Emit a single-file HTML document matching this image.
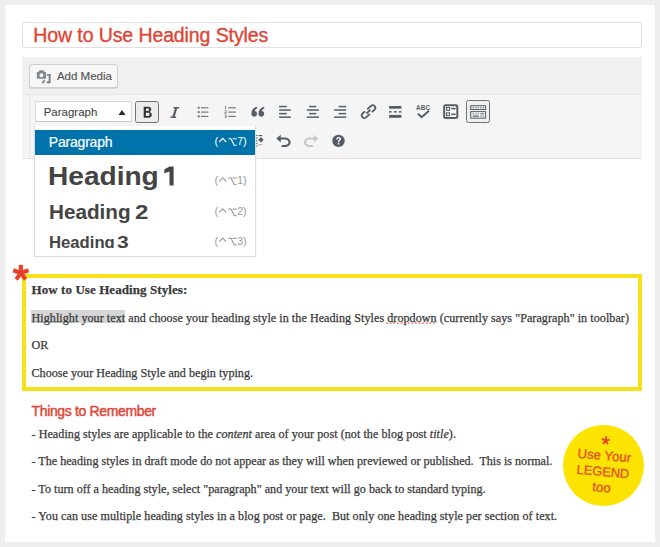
<!DOCTYPE html>
<html><head><meta charset="utf-8">
<style>
*{margin:0;padding:0;box-sizing:border-box}
html,body{width:660px;height:547px;overflow:hidden;background:#eeeeee}
body{position:relative;font-family:"Liberation Sans",sans-serif}
.a{position:absolute}
.t{position:absolute;white-space:pre;line-height:1}
#panel{left:5px;top:5px;width:650px;height:537px;background:#fff}
#title{left:22px;top:21.5px;width:620px;height:26.2px;border:1px solid #e0e0e0;border-radius:3px;background:#fff}
#tools{left:22px;top:57px;width:620px;height:37px;background:#f0f0f0}
#addmedia{left:28.9px;top:64.2px;width:89.6px;height:24.2px;border:1px solid #cfcfcf;border-radius:3px;background:#f7f7f7;box-shadow:0 1px 0 #d5d5d5}
#tbar{left:22px;top:94px;width:620px;height:64.5px;background:#f5f5f5;border-top:1px solid #e6e6e6;border-bottom:1px solid #e2e2e2}
#tbl{left:29px;top:95px;width:1px;height:63.5px;background:#e9e9e9}
#sel{left:34.5px;top:100.7px;width:97px;height:21.7px;background:#fff;border:1px solid #dadada;border-bottom-color:#c8c8c8}
#bbtn{left:135.2px;top:100.6px;width:24.3px;height:22px;border:1px solid #727272;border-radius:2.5px;background:#ececec}
#ksbtn{left:466.2px;top:100.4px;width:23.8px;height:22.2px;border:1px solid #717171;border-radius:2.5px;background:#efefef}
#dd{left:34.1px;top:125.3px;width:221.9px;height:131.7px;background:#fff;border:1px solid #dedede;border-top-color:#f2f2f2;box-shadow:0 1px 2px rgba(0,0,0,.05)}
#ddclip{left:35px;top:127px;width:220px;height:121px;overflow:hidden}
#ddblue{left:0;top:3px;width:220px;height:25px;background:#0073aa}
.sc{color:#9a9a9a;font-size:10.7px}
.h{color:#444;font-weight:bold}
#ybox{left:21.5px;top:274px;width:620.5px;height:117px;border:4px solid #f6e219}
.ser{font-family:"Liberation Serif",serif;color:#3a3a3a;font-size:12.1px;-webkit-text-stroke:0.25px #3a3a3a}
.red{color:#de4536}
#circle{left:563px;top:425px;width:81px;height:81px;border-radius:50%;background:#fde300}
svg{position:absolute;overflow:visible}
</style></head><body>
<div id="panel" class="a"></div>
<div id="title" class="a"></div>
<div class="t red" style="left:33.3px;top:25.5px;font-size:19.5px;letter-spacing:-0.1px;-webkit-text-stroke:0.35px #de4536">How to Use Heading Styles</div>

<div id="tools" class="a"></div>
<div id="addmedia" class="a"></div>
<div class="t" style="left:56.9px;top:71.3px;font-size:11.5px;color:#555;-webkit-text-stroke:0.15px #555">Add Media</div>

<div id="tbar" class="a"></div><div id="tbl" class="a"></div>
<div id="sel" class="a"></div>
<div class="t" style="left:43.7px;top:106.8px;font-size:11.5px;color:#444;-webkit-text-stroke:0.1px #444">Paragraph</div>
<div id="bbtn" class="a"></div>
<div id="ksbtn" class="a"></div>

<div id="dd" class="a"></div>
<div id="ddclip" class="a">
  <div id="ddblue" class="a"></div>
  <div class="t" style="left:13.8px;top:8.3px;font-size:14px;letter-spacing:-0.2px;color:#fff;-webkit-text-stroke:0.2px #fff">Paragraph</div>
  <div class="t h" style="left:13.4px;top:36.4px;font-size:26px;transform:scaleX(1.08);transform-origin:0 0">Heading</div>
  <div class="t h" style="left:13.5px;top:74.7px;font-size:20.1px;transform:scaleX(1.03);transform-origin:0 0">Heading</div><div class="t h" style="left:100px;top:74.7px;font-size:20.1px;transform:scaleX(1.2);transform-origin:0 0">2</div>
  <div class="t h" style="left:14px;top:106.8px;font-size:16.2px;transform:scaleX(1.03);transform-origin:0 0">Heading</div><div class="t h" style="left:81.5px;top:106.8px;font-size:16.2px;transform:scaleX(1.3);transform-origin:0 0">3</div>
</div>

<svg style="left:0;top:0" width="660" height="547"><path fill="#444" d="M169.5 166.4 L173.6 166.4 L173.6 185.5 L169.5 185.5 L169.5 171.4 L164.3 173.3 L164.3 169.6 Z"/><g fill="#fff" font-family="Liberation Sans" font-size="11"><text x="214.4" y="145.0">(</text><text x="237.3" y="145.0" font-size="10.4">7</text><text x="242.9" y="145.0">)</text></g><g fill="none" stroke="#fff" stroke-width="1.15"><polyline points="219.2,142.0 222.7,138.4 226.2,142.0"/><path d="M228.3 138.7 L231 138.7 L234.2 145.2 L236.6 145.2 M232.6 138.7 L236.6 138.7"/></g><g fill="#9b9b9b" font-family="Liberation Sans" font-size="11"><text x="214.4" y="184.3">(</text><text x="237.3" y="184.3" font-size="10.4">1</text><text x="242.9" y="184.3">)</text></g><g fill="none" stroke="#9b9b9b" stroke-width="1.15"><polyline points="219.2,181.3 222.7,177.7 226.2,181.3"/><path d="M228.3 178.0 L231 178.0 L234.2 184.5 L236.6 184.5 M232.6 178.0 L236.6 178.0"/></g><g fill="#9b9b9b" font-family="Liberation Sans" font-size="11"><text x="214.4" y="215.4">(</text><text x="237.3" y="215.4" font-size="10.4">2</text><text x="242.9" y="215.4">)</text></g><g fill="none" stroke="#9b9b9b" stroke-width="1.15"><polyline points="219.2,212.4 222.7,208.8 226.2,212.4"/><path d="M228.3 209.1 L231 209.1 L234.2 215.6 L236.6 215.6 M232.6 209.1 L236.6 209.1"/></g><g fill="#9b9b9b" font-family="Liberation Sans" font-size="11"><text x="214.4" y="244.6">(</text><text x="237.3" y="244.6" font-size="10.4">3</text><text x="242.9" y="244.6">)</text></g><g fill="none" stroke="#9b9b9b" stroke-width="1.15"><polyline points="219.2,241.6 222.7,238.0 226.2,241.6"/><path d="M228.3 238.3 L231 238.3 L234.2 244.8 L236.6 244.8 M232.6 238.3 L236.6 238.3"/></g></svg>
<div id="ybox" class="a"></div>
<div class="t ser" style="left:31.5px;top:283.2px;font-weight:bold;font-size:13px;letter-spacing:0.08px">How to Use Heading Styles:</div>
<div class="a" style="left:31.3px;top:309.7px;width:93.7px;height:13.6px;background:#d6d6d6"></div>
<div class="t ser" style="left:31.5px;top:311.5px;letter-spacing:0.052px">Highlight your text and choose your heading style in the Heading Styles dropdown (currently says "Paragraph" in toolbar)</div>
<div class="t ser" style="left:31.5px;top:338.6px">OR</div>
<div class="t ser" style="left:31.5px;top:366.5px;letter-spacing:0.02px">Choose your Heading Style and begin typing.</div>

<div class="t red" style="left:31.5px;top:403.6px;font-size:14px;letter-spacing:-0.35px;-webkit-text-stroke:0.45px #de4536">Things to Remember</div>
<div class="t ser" style="left:31.5px;top:427.6px;letter-spacing:0.055px">- Heading styles are applicable to the <i>content</i> area of your post (not the blog post <i>title</i>).</div>
<div class="t ser" style="left:31.5px;top:454.8px">- The heading styles in draft mode do not appear as they will when previewed or published.  This is normal.</div>
<div class="t ser" style="left:31.5px;top:482.8px;letter-spacing:0.019px">- To turn off a heading style, select "paragraph" and your text will go back to standard typing.</div>
<div class="t ser" style="left:31.5px;top:510.4px;letter-spacing:0.055px">- You can use multiple heading styles in a blog post or page.  But only one heading style per section of text.</div>

<div id="circle" class="a"></div>
<svg id="ov" style="left:0;top:0" width="660" height="547" viewBox="0 0 660 547">
<g fill="#82878c">
 <rect x="36.8" y="71.8" width="9.3" height="6.9" rx="1.3"/>
 <rect x="39" y="70.3" width="4.9" height="3" rx="1"/>
 <rect x="48.6" y="74" width="2" height="8.6"/>
 <rect x="47" y="74" width="3.6" height="1.8"/>
 <ellipse cx="48.6" cy="82.3" rx="1.9" ry="1.3"/>
 <path d="M44.6 79.5 L45.3 80 L44 83.2 L42 83.5 L41.8 82 Z"/>
</g>
<circle cx="41.45" cy="75.2" r="1.95" fill="#f9f9f9"/>
<path d="M118.4 114.9 L122 109.9 L125.6 114.9Z" fill="#2c2c2c"/>
<g fill="#555d66">
 </g>
<g fill="#676d72">
 <!-- bullets -->
 <circle cx="198.7" cy="107.8" r="1.15"/><circle cx="198.7" cy="112.1" r="1.15"/><circle cx="198.7" cy="116.4" r="1.15"/>
 <rect x="201" y="107.25" width="7.4" height="1.1"/><rect x="201" y="111.55" width="7.4" height="1.1"/><rect x="201" y="115.85" width="7.4" height="1.1"/>
 <!-- numbered -->
 <rect x="225.3" y="105.9" width="0.8" height="3.2"/>
 <rect x="224.7" y="110.5" width="1.8" height="0.7"/><rect x="225.8" y="111.2" width="0.7" height="0.9"/><rect x="224.7" y="112.1" width="1.8" height="0.7"/><rect x="224.7" y="112.8" width="0.7" height="0.6"/><rect x="224.7" y="113.4" width="1.8" height="0.7"/>
 <rect x="224.7" y="114.8" width="1.8" height="0.7"/><rect x="225.8" y="115.5" width="0.7" height="0.7"/><rect x="224.9" y="116.1" width="1.6" height="0.6"/><rect x="225.8" y="116.7" width="0.7" height="0.7"/><rect x="224.7" y="117.3" width="1.8" height="0.7"/>
 <rect x="228.3" y="107.25" width="7.5" height="1.1"/><rect x="228.3" y="111.55" width="7.5" height="1.1"/><rect x="228.3" y="115.85" width="7.5" height="1.1"/>
 </g>
<g fill="#555d66">
 <!-- quote -->
 <path d="M251.4 113.8 C251.4 110.2 253.3 107.9 256.9 106.8 L257.3 108.2 C255.6 109 254.9 110 254.7 111 A2.85 2.85 0 1 1 251.4 113.8Z"/>
 <path d="M258.5 113.8 C258.5 110.2 260.4 107.9 264 106.8 L264.4 108.2 C262.7 109 262 110 261.8 111 A2.85 2.85 0 1 1 258.5 113.8Z"/>
 <!-- align left -->
 <rect x="279.1" y="105.8" width="7.6" height="1.5"/><rect x="279.1" y="109.3" width="11.7" height="1.5"/><rect x="279.1" y="112.9" width="7.6" height="1.5"/><rect x="279.1" y="116.4" width="11.7" height="1.5"/>
 <!-- align center -->
 <rect x="309.1" y="105.8" width="7.2" height="1.5"/><rect x="306.8" y="109.3" width="12.1" height="1.5"/><rect x="309.1" y="112.9" width="7.2" height="1.5"/><rect x="306.8" y="116.4" width="12.1" height="1.5"/>
 <!-- align right -->
 <rect x="338.6" y="105.8" width="7.6" height="1.5"/><rect x="334.1" y="109.3" width="12.1" height="1.5"/><rect x="338.6" y="112.9" width="7.6" height="1.5"/><rect x="334.1" y="116.4" width="12.1" height="1.5"/>
 <!-- read more -->
 <rect x="389.1" y="106" width="12.3" height="2.7"/>
 <rect x="389.1" y="111.1" width="2.5" height="1.5"/><rect x="393.9" y="111.1" width="2.8" height="1.5"/><rect x="398.9" y="111.1" width="2.5" height="1.5"/>
 <rect x="389.1" y="114.9" width="12.3" height="2.9"/>
 <!-- help -->
 <circle cx="338.5" cy="140.9" r="6.2"/>
</g>
<g fill="none" stroke="#555d66">
 <!-- link -->
 <g transform="translate(368.5 111.65) rotate(-42)" stroke-width="1.8" stroke-linecap="butt">
  <path d="M0.6 -2.6 L5.6 -2.6 A2.6 2.6 0 0 1 5.6 2.6 L2.4 2.6"/>
  <path d="M-0.6 2.6 L-5.6 2.6 A2.6 2.6 0 0 1 -5.6 -2.6 L-2.4 -2.6"/>
  <path d="M-2.8 0 L2.8 0"/>
 </g>
 <!-- spellcheck -->
 <polyline points="417.8,113.6 421.6,117.3 429,110.8" stroke-width="1.9"/>
 <!-- form -->
 <rect x="444.2" y="105.2" width="13.1" height="12.8" rx="1.5" stroke-width="2" fill="#fbfbfb"/>
 <rect x="446.6" y="107.5" width="3" height="2.8" stroke-width="1.1" fill="#fff"/>
 <rect x="446.6" y="112.9" width="3" height="2.8" stroke-width="1.1" fill="#fff"/>
 <!-- kitchen sink -->
 <rect x="470.75" y="105.75" width="14.8" height="3.7" stroke-width="1.05" fill="#fafafa"/>
 <rect x="470.75" y="111.65" width="14.8" height="6.5" stroke-width="1.05" fill="#fafafa"/>
</g>
<g fill="#555d66">
 <rect x="451.3" y="107.8" width="4.4" height="1.6"/><rect x="451.3" y="113.5" width="4.4" height="1.6"/>
 <rect x="472.7" y="107.1" width="1.2" height="1.1"/><rect x="475.2" y="107.1" width="1.2" height="1.1"/><rect x="477.7" y="107.1" width="1.2" height="1.1"/><rect x="480.2" y="107.1" width="1.2" height="1.1"/><rect x="482.7" y="107.1" width="1.2" height="1.1"/>
 <rect x="472.7" y="113.3" width="1.2" height="1.1"/><rect x="475.2" y="113.3" width="1.2" height="1.1"/><rect x="477.7" y="113.3" width="1.2" height="1.1"/><rect x="480.4" y="113.3" width="3.5" height="1.1"/>
 <rect x="472.7" y="115.5" width="6.2" height="1.2"/><rect x="480.4" y="115.5" width="1.2" height="1.2"/><rect x="482.7" y="115.5" width="1.2" height="1.2"/>
 <!-- undo -->
 <path d="M276.3 138.6 L280.8 134.8 L280.8 137.4 L284.6 137.4 C288.3 137.4 290.6 139.6 290.6 142.2 C290.6 144.8 288.3 147 284.6 147 L281.6 147 L281.6 145 L284.6 145 C287 145 288.5 143.8 288.5 142.2 C288.5 140.6 287 139.5 284.6 139.5 L280.8 139.5 L280.8 142.4 Z"/>
 <!-- indent partial -->
 <rect x="256.2" y="135" width="1.3" height="1.1"/><rect x="256.2" y="137.6" width="1.3" height="1.1"/><rect x="256.2" y="140.2" width="1.3" height="1.1"/><rect x="256.2" y="142.8" width="1.3" height="1.1"/><rect x="256.2" y="145.4" width="1.3" height="1.1"/>
 <rect x="258.5" y="135" width="3.6" height="1.1"/>
 <path d="M258.4 139.8 L261 137.1 L263.6 139.8 L261 142.5 Z"/>
 <rect x="258.5" y="144.2" width="3.4" height="1" opacity="0.5"/>
</g>
<path transform="translate(594.6 0) scale(-1 1)" fill="#c5c8cb" d="M276.3 138.6 L280.8 134.8 L280.8 137.4 L284.6 137.4 C288.3 137.4 290.6 139.6 290.6 142.2 C290.6 144.8 288.3 147 284.6 147 L281.6 147 L281.6 145 L284.6 145 C287 145 288.5 143.8 288.5 142.2 C288.5 140.6 287 139.5 284.6 139.5 L280.8 139.5 L280.8 142.4 Z"/>
<line x1="386.2" y1="323.1" x2="434.5" y2="323.1" stroke="#e4492f" stroke-width="1.1" stroke-dasharray="1.7 1.9" opacity="0.85"/>
<path fill="#fff" d="M336.2 139.4 C336.2 137.9 337.2 137 338.6 137 C340 137 341 137.9 341 139.1 C341 140.2 340.3 140.7 339.7 141.1 C339.3 141.4 339.2 141.7 339.2 142.2 L337.9 142.2 C337.9 141.3 338.1 140.8 338.7 140.3 C339.3 139.9 339.5 139.6 339.5 139.1 C339.5 138.6 339.1 138.3 338.6 138.3 C338 138.3 337.6 138.7 337.6 139.4 Z M337.85 143 H339.25 V144.4 H337.85 Z"/>
<text x="423.1" y="109.7" fill="#555d66" font-family="Liberation Sans" font-weight="bold" font-size="6.3" text-anchor="middle" letter-spacing="0.2">ABC</text>
<!-- B and I -->
<path fill="#333" fill-rule="evenodd" d="M143.7 106.7 H148.2 C150.2 106.7 151.2 107.9 151.2 109.4 C151.2 110.6 150.5 111.5 149.5 111.9 C150.9 112.3 151.8 113.3 151.8 114.8 C151.8 116.6 150.5 117.8 148.3 117.8 H143.7 Z M145.9 108.6 H147.9 C148.7 108.6 149.1 109.1 149.1 109.7 C149.1 110.4 148.7 110.9 147.9 110.9 H145.9 Z M145.9 112.8 H148.1 C149.1 112.8 149.6 113.4 149.6 114.3 C149.6 115.3 149.1 115.9 148.1 115.9 H145.9 Z"/>
<path fill="#555d66" d="M173.6 107 L179.2 107 L178.9 108.6 L177.2 108.6 L174.7 116.4 L176.3 116.4 L176 118 L170.3 118 L170.6 116.4 L172.4 116.4 L174.9 108.6 L173.3 108.6Z"/>
</svg>

<svg style="left:0;top:0" width="660" height="547" viewBox="0 0 660 547"><path fill="#e63f2b" stroke="#e63f2b" stroke-width="0.3" stroke-linejoin="round" d="M22.85 272.90 L22.85 265.00 L18.95 265.00 L18.95 272.90ZM21.50 274.75 L29.02 272.31 L27.81 268.60 L20.30 271.05ZM19.32 274.05 L23.97 280.44 L27.12 278.15 L22.48 271.75ZM19.32 271.75 L14.68 278.15 L17.83 280.44 L22.48 274.05ZM21.50 271.05 L13.99 268.60 L12.78 272.31 L20.30 274.75Z"/><circle cx="20.9" cy="272.9" r="2.6" fill="#e63f2b"/></svg>
<div class="a" style="left:563px;top:425px;width:81px;height:81px;transform:rotate(5deg)">
 <svg style="left:0;top:0" width="81" height="81"><path fill="#e8452a" d="M41.45 15.50 L41.45 11.30 L39.55 11.30 L39.55 15.50ZM40.79 16.40 L44.79 15.11 L44.20 13.30 L40.21 14.60ZM39.73 16.06 L42.20 19.46 L43.74 18.34 L41.27 14.94ZM39.73 14.94 L37.26 18.34 L38.80 19.46 L41.27 16.06ZM40.79 14.60 L36.80 13.30 L36.21 15.11 L40.21 16.40Z"/><circle cx="40.5" cy="15.5" r="1.2" fill="#e8452a"/></svg>
 <div class="t red" style="left:0;width:81px;text-align:center;top:24px;font-size:13.2px;color:#e4532a;-webkit-text-stroke:0.35px #e4532a">Use Your</div>
 <div class="t red" style="left:0;width:81px;text-align:center;top:41px;font-size:12.8px;color:#e4532a;-webkit-text-stroke:0.35px #e4532a">LEGEND</div>
 <div class="t red" style="left:0;width:81px;text-align:center;top:56.4px;font-size:13.2px;color:#e4532a;-webkit-text-stroke:0.35px #e4532a">too</div>
</div>
</body></html>
